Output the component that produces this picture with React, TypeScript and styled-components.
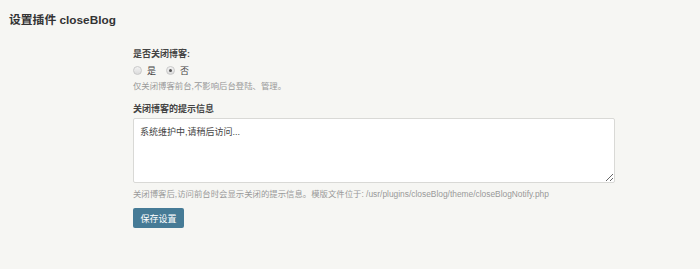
import styled, { createGlobalStyle } from "styled-components";

const GlobalStyle = createGlobalStyle`
  html, body {
    margin: 0;
    padding: 0;
    background: #f6f6f3;
  }
  body {
    font-family: "Liberation Sans", "Noto Sans CJK SC", sans-serif;
    color: #444;
  }
`;

const Page = styled.div`
  width: 700px;
  height: 269px;
  box-sizing: border-box;
  padding: 12px 9px 0;
  background: #f6f6f3;
`;

const Title = styled.h2`
  margin: 0;
  font-size: 11.8px;
  line-height: 16px;
  font-weight: 700;
  color: #333;
`;

const Body = styled.div`
  display: grid;
  grid-template-columns: 124px 482px 1fr;
  margin-top: 18px;
`;

const Form = styled.form`
  grid-column: 2;
  display: flex;
  flex-direction: column;
`;

const Label = styled.div<{ gap?: number }>`
  margin-top: ${(p) => p.gap ?? 0}px;
  font-size: 9px;
  line-height: 16px;
  font-weight: 700;
  color: #444;
`;

const RadioRow = styled.div`
  display: flex;
  align-items: center;
  height: 16px;
  font-size: 9px;
  color: #444;
`;

const RadioItem = styled.label`
  display: flex;
  align-items: center;
  gap: 5px;
  margin-right: 10px;
`;

const RadioDot = styled.span<{ checked?: boolean }>`
  position: relative;
  width: 7px;
  height: 7px;
  border-radius: 50%;
  border: 1px solid #c9c9c9;
  background: linear-gradient(#f2f2f2, #dcdcdc);

  &::after {
    content: "";
    display: ${(p) => (p.checked ? "block" : "none")};
    position: absolute;
    left: 2px;
    top: 2px;
    width: 3px;
    height: 3px;
    border-radius: 50%;
    background: #555;
  }
`;

const Desc = styled.p<{ gap?: number }>`
  margin: ${(p) => p.gap ?? 0}px 0 0;
  font-size: 8.4px;
  line-height: 16px;
  color: #999;
  white-space: nowrap;
`;

const TextArea = styled.textarea`
  margin-top: 1px;
  width: 100%;
  height: 65px;
  box-sizing: border-box;
  padding: 5px 6px;
  border: 1px solid #d9d9d6;
  border-radius: 2px;
  background: #fff;
  font-family: "Liberation Sans", "Noto Sans CJK SC", sans-serif;
  font-size: 9px;
  line-height: 16px;
  color: #444;
  outline: none;
`;

const Button = styled.button`
  margin-top: 6px;
  align-self: flex-start;
  width: 51px;
  height: 20px;
  padding: 0;
  border: none;
  border-radius: 2px;
  background: #467b96;
  color: #fff;
  font-family: "Liberation Sans", "Noto Sans CJK SC", sans-serif;
  font-size: 9px;
  cursor: pointer;
`;

export default function App() {
  return (
    <>
      <GlobalStyle />
      <Page>
        <Title>设置插件 closeBlog</Title>
        <Body>
          <Form onSubmit={(e) => e.preventDefault()}>
            <Label>是否关闭博客:</Label>
            <RadioRow>
              <RadioItem>
                <RadioDot />
                是
              </RadioItem>
              <RadioItem>
                <RadioDot checked />
                否
              </RadioItem>
            </RadioRow>
            <Desc>仅关闭博客前台,不影响后台登陆、管理。</Desc>
            <Label gap={7}>关闭博客的提示信息</Label>
            <TextArea defaultValue="系统维护中,请稍后访问..." />
            <Desc gap={3}>
              关闭博客后,访问前台时会显示关闭的提示信息。模版文件位于: /usr/plugins/closeBlog/theme/closeBlogNotify.php
            </Desc>
            <Button type="submit">保存设置</Button>
          </Form>
        </Body>
      </Page>
    </>
  );
}
